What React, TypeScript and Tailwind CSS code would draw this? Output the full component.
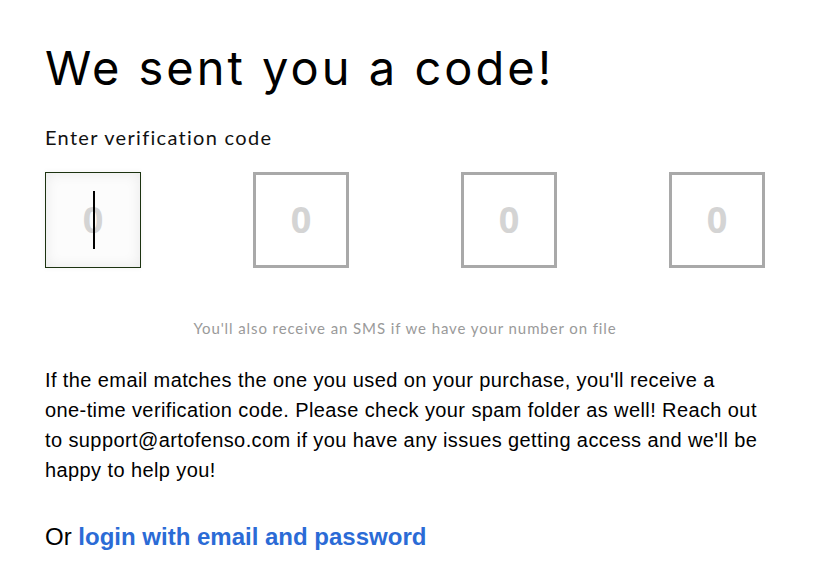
import React from "react"

const DIGITS = [0, 1, 2, 3]

function DigitBox({ active }: { active: boolean }) {
  return (
    <div
      className={
        active
          ? "relative flex h-[96px] w-[96px] items-center justify-center border border-[#1c3310] bg-[#fcfcfc] shadow-[inset_0_0_14px_rgba(0,0,0,0.08),0_0_6px_rgba(0,0,0,0.05)]"
          : "flex h-[96px] w-[96px] items-center justify-center border-[3px] border-[#a9a9a9] bg-white"
      }
    >
      <span className="font-['Open_Sans',sans-serif] text-[36px] font-bold text-[#d4d4d4]">0</span>
      {active && <span className="absolute left-[47px] top-[18px] h-[58px] w-[2px] bg-black" />}
    </div>
  )
}

export default function App() {
  return (
    <div className="min-h-[582px] w-[818px] bg-white pl-[45px] pt-[38px]">
      <h1 className="font-['Inter',sans-serif] text-[47px] leading-[60px] font-normal tracking-[3px] text-black">
        We sent you a code!
      </h1>
      <p className="mt-[27px] font-['Lato',sans-serif] text-[20px] leading-6 tracking-[1.3px] text-[#111]">
        Enter verification code
      </p>

      <div className="mt-[23px] flex w-[720px] justify-between">
        {DIGITS.map((i) => (
          <DigitBox key={i} active={i === 0} />
        ))}
      </div>

      <p className="mt-[50px] w-[720px] text-center font-['Lato',sans-serif] text-[15px] leading-5 tracking-[0.9px] text-[#9a9a9a]">
        You'll also receive an SMS if we have your number on file
      </p>

      <p className="mt-[27px] w-[722px] font-['Liberation_Sans',Arial,sans-serif] text-[20px] leading-[30px] tracking-[0.4px] text-black">
        If the email matches the one you used on your purchase, you'll receive a{" "}
        <span className="whitespace-nowrap">one-time</span> verification code. Please check your spam folder as well! Reach out to support@artofenso.com if you have any issues getting access and we'll be happy to help you!
      </p>

      <p className="mt-[36px] font-['Liberation_Sans',Arial,sans-serif] text-[24px] leading-8 text-black">
        Or <a className="font-bold text-[#2b6bd6]" href="#">login with email and password</a>
      </p>
    </div>
  )
}
